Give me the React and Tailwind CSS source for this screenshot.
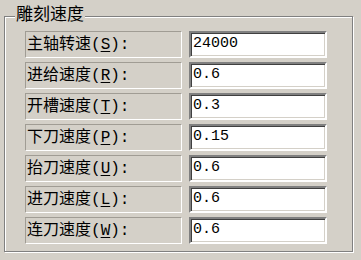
import React from "react";

const rows = [
  { label: "主轴转速", key: "S", value: "24000" },
  { label: "进给速度", key: "R", value: "0.6" },
  { label: "开槽速度", key: "T", value: "0.3" },
  { label: "下刀速度", key: "P", value: "0.15" },
  { label: "抬刀速度", key: "U", value: "0.6" },
  { label: "进刀速度", key: "L", value: "0.6" },
  { label: "连刀速度", key: "W", value: "0.6" },
];

const font = "font-['Liberation_Mono','Noto_Sans_CJK_SC',monospace]";

export default function App() {
  return (
    <div className="w-[361px] h-[260px] bg-[#d4d0c8] pt-[16px] pl-[4px] overflow-hidden">
      {/* etched group box */}
      <div className="w-[349px] h-[236px] border border-[#808080] shadow-[inset_1px_1px_0_#ffffff,1px_1px_0_#ffffff]">
        <div className="-mt-[10px] h-[18px] ml-[10px] flex">
          <span className={`bg-[#d4d0c8] px-[1px] text-[17px] leading-[18px] text-black ${font}`}>
            雕刻速度
          </span>
        </div>
        <div className="mt-[6px] pl-[20px] flex flex-col gap-[4px]">
          {rows.map((r) => (
            <div key={r.key} className="flex items-stretch gap-[7px] h-[27px]">
              <div
                className={`w-[157px] border border-t-[#a09c94] border-l-[#a09c94] border-b-white border-r-white flex items-center pl-[1px] text-[16px] text-black ${font}`}
              >
                {r.label}(<span className="underline underline-offset-2">{r.key}</span>):
              </div>
              <input
                readOnly
                defaultValue={r.value}
                className={`w-[138px] bg-white border-2 border-t-[#808080] border-l-[#808080] border-b-white border-r-white shadow-[inset_1px_1px_0_#404040,inset_-1px_-1px_0_#d4d0c8] px-[2px] text-[15px] text-black outline-none ${font}`}
              />
            </div>
          ))}
        </div>
      </div>
    </div>
  );
}
